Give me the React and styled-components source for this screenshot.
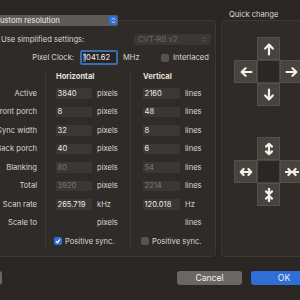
import styled, { createGlobalStyle } from "styled-components";

const GlobalStyle = createGlobalStyle`
  html, body {
    margin: 0;
    padding: 0;
    background: #292623;
    overflow: hidden;
  }
  body {
    font-family: Inter, "Liberation Sans", sans-serif;
    font-size: 7.6px;
    color: #dbd7d3;
  }
`;

const Window = styled.div`
  width: 380px;
  height: 300px;
  margin-left: -40px;
  padding-top: 10px;
  box-sizing: border-box;
  display: flex;
  flex-direction: column;
`;

const TopRow = styled.div`
  display: flex;
  align-items: flex-start;
  padding-left: 8px;
`;

const Box = styled.div`
  box-sizing: border-box;
  width: ${(p) => p.$w}px;
  height: 237px;
  background: #2e2b28;
  border: 1px solid #3b3835;
  border-radius: 4px;
  display: flex;
  flex-direction: column;
`;

const LeftBox = styled(Box)`
  margin-top: 10px;
`;

const Popup = styled.div`
  margin-top: -6px;
  margin-left: 20px;
  width: 129px;
  height: 10.5px;
  box-sizing: border-box;
  background: #5d5a57;
  border-radius: 2.5px;
  display: flex;
  align-items: center;
  padding-left: 5.5px;
  padding-right: 1px;
  color: #f2eeea;
`;

const Stepper = styled.span`
  margin-left: auto;
  width: 8px;
  height: 8.5px;
  border-radius: 2px;
  background: #2f6fd8;
  display: flex;
  align-items: center;
  justify-content: center;
`;

const SettingsRow = styled.div`
  margin-top: 8.5px;
  height: 10.5px;
  display: flex;
  align-items: center;
  padding-left: 18px;
  padding-right: 3.5px;
`;

const Check = styled.span`
  flex: none;
  width: 8px;
  height: 8px;
  box-sizing: border-box;
  border-radius: 2px;
  background: ${(p) => (p.$on ? "#2f6fd8" : "#55524f")};
  margin-left: ${(p) => p.$ml || 0}px;
  margin-right: ${(p) => p.$mr || 4}px;
  display: flex;
  align-items: center;
  justify-content: center;
`;

const DisabledPopup = styled.div`
  margin-left: auto;
  width: 77px;
  height: 10.5px;
  box-sizing: border-box;
  background: #3a3734;
  border-radius: 2.5px;
  display: flex;
  align-items: center;
  padding: 0 4px;
  color: #6c6966;
`;

const PopupArrows = styled.span`
  margin-left: auto;
  display: flex;
`;

const ClockRow = styled.div`
  margin-top: 5.5px;
  height: 15px;
  display: flex;
  align-items: center;
`;

const ClockLabel = styled.span`
  width: 105px;
  text-align: right;
`;

const FocusField = styled.span`
  margin-left: 6px;
  width: 38px;
  height: 15px;
  box-sizing: border-box;
  border: 2px solid #3b6ea9;
  border-radius: 2px;
  background: #272421;
  color: #f4f0ec;
  display: flex;
  align-items: center;
  padding-left: 1px;
`;

const Caret = styled.span`
  background: #3b5f8e;
`;

const Unit = styled.span`
  margin-left: 5px;
  width: ${(p) => p.$w || "auto"};
`;

const Table = styled.div`
  margin-top: 5px;
  display: flex;
`;

const LabelCol = styled.div`
  width: 68px;
  display: flex;
  flex-direction: column;
  align-items: flex-end;
`;

const ValueCol = styled.div`
  box-sizing: border-box;
  width: ${(p) => p.$w}px;
  margin-left: ${(p) => p.$ml || 0}px;
  padding-left: ${(p) => p.$pl}px;
  border-left: 1px solid #3e3b38;
  display: flex;
  flex-direction: column;
`;

const HeadRow = styled.div`
  height: 14px;
  padding-bottom: 2px;
  box-sizing: border-box;
  display: flex;
  align-items: center;
  font-weight: 700;
  color: #e6e2de;
`;

const Row = styled.div`
  height: 18.5px;
  display: flex;
  align-items: center;
  white-space: nowrap;
`;

const SyncRow = styled.div`
  height: 14px;
  padding-top: 4px;
  box-sizing: border-box;
  display: flex;
  align-items: center;
  white-space: nowrap;
`;

const Field = styled.span`
  width: ${(p) => p.$w}px;
  height: 10.5px;
  box-sizing: border-box;
  padding-left: 1.5px;
  background: ${(p) => (p.$blank ? "transparent" : "#3a3734")};
  color: ${(p) => (p.$dim ? "#7a7774" : "#eeeae6")};
  display: flex;
  align-items: center;
`;

const QuickCol = styled.div`
  margin-left: 5.5px;
  display: flex;
  flex-direction: column;
`;

const QuickTitle = styled.div`
  height: 10px;
  line-height: 10px;
  padding-left: 8px;
`;

const QuickBox = styled(Box)`
  align-items: center;
  padding-top: 16px;
  gap: 31px;
`;

const Cross = styled.div`
  display: grid;
  grid-template-columns: repeat(3, 23px);
  grid-template-rows: repeat(3, 23px);
`;

const Cell = styled.div`
  grid-column: ${(p) => p.$c};
  grid-row: ${(p) => p.$r};
  background: ${(p) => (p.$mid ? "#2a2724" : "#47443f")};
  box-shadow: inset 0 0 0 1px ${(p) => (p.$mid ? "#4a4643" : "#54514d")};
  display: flex;
  align-items: center;
  justify-content: center;
`;

const Footer = styled.div`
  margin-top: 14px;
  display: flex;
  align-items: center;
`;

const Button = styled.div`
  width: ${(p) => p.$w}px;
  height: 13.5px;
  margin-left: ${(p) => p.$ml || 0}px;
  border-radius: 3px;
  background: ${(p) => (p.$primary ? "#2e6ed6" : "#6a6663")};
  color: #f4f0ec;
  font-size: 8.6px;
  display: flex;
  align-items: center;
  justify-content: center;
`;

const paths = {
  up: "M7 12.5V3 M3.2 6.6 L7 2.6 L10.8 6.6",
  down: "M7 1.5V11 M3.2 7.4 L7 11.4 L10.8 7.4",
  left: "M12.5 7H3 M6.6 3.2 L2.6 7 L6.6 10.8",
  right: "M1.5 7H11 M7.4 3.2 L11.4 7 L7.4 10.8",
  vboth: "M7 2.5V11.5 M4 4.6 L7 1.8 L10 4.6 M4 9.4 L7 12.2 L10 9.4",
  hboth: "M2.5 7H11.5 M4.6 4 L1.8 7 L4.6 10 M9.4 4 L12.2 7 L9.4 10",
  hin: "M0.5 7H5.5 M13.5 7H8.5 M3.4 4 L6.2 7 L3.4 10 M10.6 4 L7.8 7 L10.6 10",
  vin: "M7 0.5V5.5 M7 13.5V8.5 M4 3.4 L7 6.2 L10 3.4 M4 10.6 L7 7.8 L10 10.6",
};

const Arrow = ({ kind }) => (
  <svg width="14" height="14" viewBox="0 0 14 14">
    <path
      d={paths[kind]}
      fill="none"
      stroke="#f2eeea"
      strokeWidth="2.2"
      strokeLinecap="round"
      strokeLinejoin="round"
    />
  </svg>
);

const Tick = () => (
  <svg width="6" height="6" viewBox="0 0 6 6">
    <path d="M1 3.2 L2.4 4.7 L5 1.3" fill="none" stroke="#fff" strokeWidth="1.2" />
  </svg>
);

const Chevrons = ({ color }) => (
  <svg width="5" height="7" viewBox="0 0 5 7">
    <path d="M1 2.6 L2.5 1.1 L4 2.6 M1 4.4 L2.5 5.9 L4 4.4" fill="none" stroke={color} strokeWidth="0.9" />
  </svg>
);

const labels = ["Active", "Front porch", "Sync width", "Back porch", "Blanking", "Total", "Scan rate", "Scale to"];

const horizontal = [
  ["3840", "pixels"],
  ["8", "pixels"],
  ["32", "pixels"],
  ["40", "pixels"],
  ["80", "pixels", true],
  ["3920", "pixels", true],
  ["265.719", "kHz"],
  [null, "pixels"],
];

const vertical = [
  ["2160", "lines"],
  ["48", "lines"],
  ["8", "lines"],
  ["6", "lines"],
  ["54", "lines", true],
  ["2214", "lines", true],
  ["120.018", "Hz"],
  [null, "lines"],
];

const Cross4 = ({ kinds }) => (
  <Cross>
    <Cell $c={2} $r={1}><Arrow kind={kinds[0]} /></Cell>
    <Cell $c={1} $r={2}><Arrow kind={kinds[1]} /></Cell>
    <Cell $c={2} $r={2} $mid />
    <Cell $c={3} $r={2}><Arrow kind={kinds[2]} /></Cell>
    <Cell $c={2} $r={3}><Arrow kind={kinds[3]} /></Cell>
  </Cross>
);

const Column = ({ title, rows, w, pl, ml, fw, sync }) => (
  <ValueCol $w={w} $pl={pl} $ml={ml}>
    <HeadRow>{title}</HeadRow>
    {rows.map(([v, unit, dim], i) => (
      <Row key={i}>
        <Field $w={fw} $dim={dim} $blank={v === null}>{v}</Field>
        <Unit>{unit}</Unit>
      </Row>
    ))}
    <SyncRow>
      <Check $on={sync} $ml={-2} $mr={3}>{sync && <Tick />}</Check>
      Positive sync.
    </SyncRow>
  </ValueCol>
);

export default function App() {
  return (
    <>
      <GlobalStyle />
      <Window>
        <TopRow>
          <LeftBox $w={247.5}>
            <Popup>
              Custom resolution
              <Stepper><Chevrons color="#fff" /></Stepper>
            </Popup>
            <SettingsRow>
              <Check $mr={6} />
              Use simplified settings:
              <DisabledPopup>
                CVT-RB v2
                <PopupArrows><Chevrons color="#6c6966" /></PopupArrows>
              </DisabledPopup>
            </SettingsRow>
            <ClockRow>
              <ClockLabel>Pixel Clock:</ClockLabel>
              <FocusField><Caret>1</Caret>041.62</FocusField>
              <Unit $w="38px">MHz</Unit>
              <Check />
              Interlaced
            </ClockRow>
            <Table>
              <LabelCol>
                <HeadRow />
                {labels.map((l) => (
                  <Row key={l}>{l}</Row>
                ))}
              </LabelCol>
              <Column title="Horizontal" rows={horizontal} w={85} pl={10} ml={8} fw={36} sync />
              <Column title="Vertical" rows={vertical} w={84} pl={12} fw={37} />
            </Table>
          </LeftBox>
          <QuickCol>
            <QuickTitle>Quick change</QuickTitle>
            <QuickBox $w={95}>
              <Cross4 kinds={["up", "left", "right", "down"]} />
              <Cross4 kinds={["vboth", "hboth", "hin", "vin"]} />
            </QuickBox>
          </QuickCol>
        </TopRow>
        <Footer>
          <Button $w={42} />
          <Button $w={65} $ml={175}>Cancel</Button>
          <Button $w={66} $ml={9} $primary>OK</Button>
        </Footer>
      </Window>
    </>
  );
}
